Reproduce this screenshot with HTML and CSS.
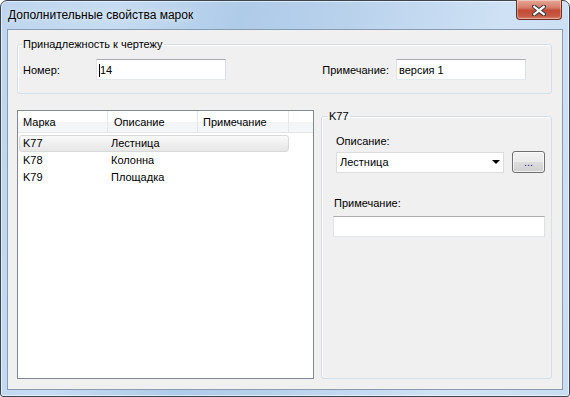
FILE: index.html
```html
<!DOCTYPE html>
<html lang="ru">
<head>
    <meta charset="UTF-8">
    <title>Дополнительные свойства марок</title>
    <link rel="stylesheet" href="styles.css">
</head>
<body>
    <div class="window">
        <div class="titlebar">
            <span class="title">Дополнительные свойства марок</span>
            <div class="close-btn">
                <svg width="14" height="11" viewBox="0 0 14 11">
                    <path d="M2 1.5 L12 9.5 M12 1.5 L2 9.5" stroke="#3b3b3b" stroke-width="4.2" stroke-linecap="square"/>
                    <path d="M2.3 1.8 L11.7 9.2 M11.7 1.8 L2.3 9.2" stroke="#fff" stroke-width="2.2" stroke-linecap="square"/>
                </svg>
            </div>
        </div>

        <div class="client">
            <fieldset class="group group-drawing">
                <legend>Принадлежность к чертежу</legend>
                <div class="drawing-row">
                    <label class="lbl-number">Номер:</label>
                    <div class="edit edit-short"><span class="caret"></span>14</div>
                    <div class="spacer"></div>
                    <label class="lbl-note">Примечание:</label>
                    <div class="edit edit-short">версия 1</div>
                </div>
            </fieldset>

            <div class="lower">
                <div class="listview">
                    <div class="lv-header">
                        <div class="lv-col col-mark">Марка</div>
                        <div class="lv-col col-desc">Описание</div>
                        <div class="lv-col col-note">Примечание</div>
                        <div class="lv-col col-fill"></div>
                    </div>
                    <div class="lv-rows">
                        <div class="lv-row selected">
                            <span class="col-mark">K77</span>
                            <span class="col-desc">Лестница</span>
                        </div>
                        <div class="lv-row">
                            <span class="col-mark">K78</span>
                            <span class="col-desc">Колонна</span>
                        </div>
                        <div class="lv-row">
                            <span class="col-mark">K79</span>
                            <span class="col-desc">Площадка</span>
                        </div>
                    </div>
                </div>

                <fieldset class="group group-mark">
                    <legend>K77</legend>
                    <label class="field-label">Описание:</label>
                    <div class="combo-row">
                        <div class="combo">
                            <span>Лестница</span>
                            <span class="arrow"></span>
                        </div>
                        <div class="btn-more">...</div>
                    </div>
                    <label class="field-label note-label">Примечание:</label>
                    <div class="edit edit-wide"></div>
                </fieldset>
            </div>
        </div>
    </div>
</body>
</html>
```

FILE: styles.css
```css
* {
    box-sizing: border-box;
}

body {
    margin: 0;
    font-family: 'Liberation Sans', Arial, sans-serif;
    font-size: 12px;
    color: #000;
    background: #fff;
}

.window {
    width: 570px;
    height: 397px;
    border: 1px solid #3c4650;
    border-radius: 7px 7px 3px 3px;
    padding: 0 6px 6px;
    display: flex;
    flex-direction: column;
    background: linear-gradient(100deg, #bdd5ee 0%, #c6dcf2 18%, #aecbe8 38%, #b9d2ec 55%, #cfe2f5 80%, #c9ddf2 100%);
    box-shadow: inset 0 0 0 1px rgba(255, 255, 255, 0.55);
}

/* title bar */
.titlebar {
    height: 28px;
    display: flex;
    align-items: flex-start;
}

.title {
    flex: 1;
    padding: 7px 0 0 1px;
    line-height: 15px;
    text-shadow: 0 0 6px rgba(255, 255, 255, 0.9);
}

.close-btn {
    width: 46px;
    height: 20px;
    margin: -1px 1px 0 0;
    border: 1px solid #6d2f25;
    border-top: none;
    border-radius: 0 0 4px 4px;
    background: linear-gradient(#e7a898 0%, #d77c69 40%, #c24a33 55%, #c75a44 85%, #d98a73 100%);
    box-shadow: inset 0 0 0 1px rgba(255, 255, 255, 0.35);
    display: flex;
    align-items: center;
    justify-content: center;
    padding-top: 1px;
}

/* client area */
.client {
    flex: 1;
    font-size: 11px;
    border: 1px solid #8a9bb0;
    background: #f0f0f0;
    padding: 8px 10px 10px 9px;
    display: flex;
    flex-direction: column;
}

.group {
    margin: 0;
    border: 1px solid #d5dfe5;
    border-radius: 3px;
    box-shadow: inset 1px 1px 0 #fff;
}

.group legend {
    padding: 0 1px;
    line-height: 13px;
}

.group-drawing {
    height: 56px;
    padding: 8px 25px 0 5px;
}

.group-drawing legend {
    margin-left: -1px;
}

.drawing-row {
    display: flex;
    align-items: center;
}

.lbl-number {
    width: 73px;
}

.spacer {
    flex: 1;
}

.lbl-note {
    margin-right: 7px;
}

.edit {
    height: 21px;
    background: #fff;
    border: 1px solid;
    border-color: #abadb3 #dbdfe6 #e3e9ef #e2e3ea;
    padding: 1px 2px 0;
    line-height: 13px;
    display: flex;
    align-items: center;
}

.edit-short {
    width: 130px;
}

.caret {
    width: 1px;
    height: 13px;
    background: #000;
}

/* lower part */
.lower {
    flex: 1;
    margin-top: 16px;
    display: flex;
    gap: 7px;
}

.listview {
    width: 298px;
    border: 1px solid #828790;
    background: #fff;
}

.lv-header {
    display: flex;
    height: 22px;
    border-bottom: 1px solid #e5e5e5;
    background: linear-gradient(#fff 0%, #fff 50%, #f3f4f6 51%, #f6f7f8 100%);
}

.lv-col {
    line-height: 22px;
    padding-left: 5px;
    border-right: 1px solid #e3e8ee;
}

.lv-header .col-mark { width: 90px; }
.lv-header .col-desc { width: 90px; padding-left: 6px; }
.lv-header .col-note { width: 91px; }
.lv-header .col-fill { flex: 1; border-right: none; }

.lv-rows {
    padding: 2px 0 0 1px;
}

.lv-row {
    width: 270px;
    height: 17px;
    line-height: 15px;
    display: flex;
    border: 1px solid transparent;
    border-radius: 3px;
}

.lv-row.selected {
    border-color: #d9d9d9;
    background: linear-gradient(#fafafa, #e6e6e6);
}

.lv-row .col-mark {
    width: 89px;
    padding-left: 3px;
}

.lv-row .col-desc {
    padding-left: 2px;
}

.group-mark {
    width: 231px;
    padding: 12px 6px 0 11px;
}

.group-mark legend {
    margin-left: -5px;
}

.field-label {
    display: block;
    margin-left: 3px;
    line-height: 13px;
}

.combo-row {
    display: flex;
    align-items: center;
    height: 22px;
    margin: 3px 0 0 3px;
}

.combo {
    width: 168px;
    height: 21px;
    background: #fff;
    border: 1px solid #dcdcdc;
    display: flex;
    align-items: center;
    justify-content: space-between;
    padding: 0 3px 0 3px;
}

.arrow {
    width: 0;
    height: 0;
    border-left: 4px solid transparent;
    border-right: 4px solid transparent;
    border-top: 4px solid #000;
}

.btn-more {
    width: 33px;
    height: 22px;
    margin-left: 8px;
    border: 1px solid #707070;
    border-radius: 3px;
    background: linear-gradient(#f2f2f2 0%, #ebebeb 48%, #dddddd 52%, #cfcfcf 100%);
    box-shadow: inset 0 0 0 1px rgba(255, 255, 255, 0.7);
    color: #33246a;
    text-align: center;
    line-height: 20px;
}

.note-label {
    margin: 24px 0 0 1px;
}

.edit-wide {
    width: 212px;
    margin-top: 6px;
}
```
